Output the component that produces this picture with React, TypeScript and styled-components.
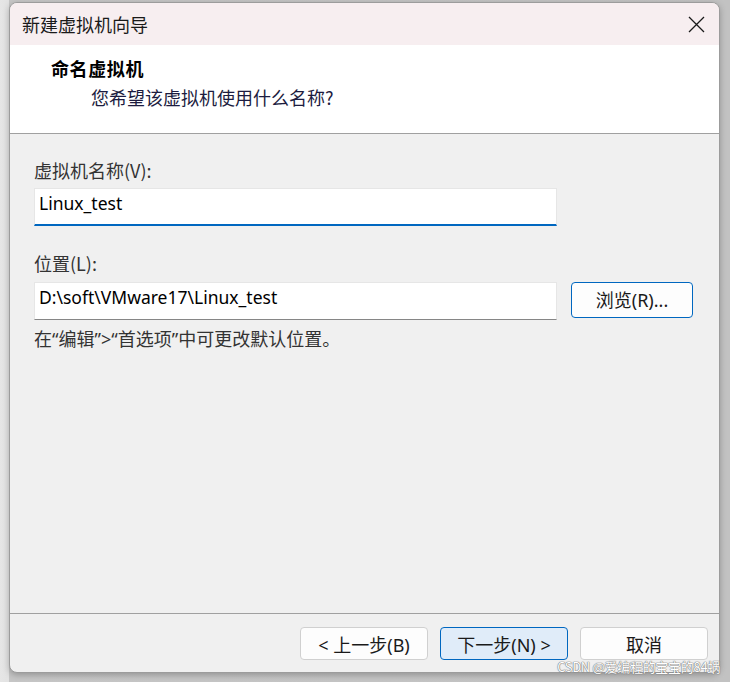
import React from "react";
import styled, { createGlobalStyle } from "styled-components";

const Global = createGlobalStyle`
  html, body { margin: 0; padding: 0; }
  body {
    width: 730px;
    height: 682px;
    overflow: hidden;
    background: linear-gradient(to right, #e6e6e6 0, #e2e2e2 9px, #c6c6c6 9px, #c2c2c2 100%);
    font-family: "Noto Sans", "Noto Sans CJK SC", sans-serif;
  }
`;

const Page = styled.div`
  position: relative;
  width: 730px;
  height: 682px;
  padding: 2px 0 0 9px;
  box-sizing: border-box;
`;

const Window = styled.div`
  width: 711px;
  height: 671px;
  box-sizing: border-box;
  border: 1px solid #9c9c9c;
  border-radius: 8px;
  overflow: hidden;
  display: flex;
  flex-direction: column;
  background: #f0f0f0;
  box-shadow: 0 2px 6px rgba(0, 0, 0, 0.25);
`;

const TitleBar = styled.div`
  height: 42px;
  flex: none;
  display: flex;
  align-items: center;
  justify-content: space-between;
  padding: 0 14px 0 12px;
  background: #f7eef0;
  font-family: "Noto Sans CJK SC", sans-serif;
  font-size: 18px;
  color: #1a1a1a;
`;

const CloseBtn = styled.div`
  width: 18px;
  height: 18px;
  display: flex;
  align-items: center;
  justify-content: center;
`;

const Header = styled.div`
  height: 89px;
  flex: none;
  box-sizing: border-box;
  background: #ffffff;
  border-bottom: 1px solid #a0a0a0;
  padding: 11px 0 0 41px;
  display: flex;
  flex-direction: column;
  gap: 5px;
  font-family: "Noto Sans CJK SC", sans-serif;
  font-size: 18px;
  line-height: 24px;
`;

const HeaderTitle = styled.div`
  font-weight: 700;
  letter-spacing: 0.6px;
  color: #000;
`;

const HeaderSub = styled.div`
  margin-left: 40px;
  color: #1c1c40;
`;

const Body = styled.div`
  flex: 1;
  padding: 24px 0 0 24px;
  display: flex;
  flex-direction: column;
  font-family: "Noto Sans CJK SC", sans-serif;
  font-size: 18px;
  line-height: 24px;
  color: #333;
`;

const Label = styled.div<{ $gap: number }>`
  margin-top: ${(p) => p.$gap}px;
  color: #333;
`;

const Row = styled.div<{ $gap: number }>`
  margin-top: ${(p) => p.$gap}px;
  display: flex;
  align-items: flex-start;
  gap: 14px;
`;

const TextBox = styled.div<{ $focused?: boolean }>`
  width: 523px;
  height: 38px;
  box-sizing: border-box;
  background: #fff;
  border: 1px solid #e6e6e6;
  border-bottom: ${(p) => (p.$focused ? "2px solid #0067c0" : "1px solid #868686")};
  padding: 0 0 0 4px;
  display: flex;
  align-items: center;
  font-family: "Noto Sans", "Noto Sans CJK SC", sans-serif;
  font-size: 17.5px;
  color: #000;
  padding-bottom: ${(p) => (p.$focused ? 7 : 8)}px;
`;

const Hint = styled.div`
  margin-top: 7px;
  color: #333;
  font-family: "Noto Sans", "Noto Sans CJK SC", sans-serif;
`;

const Footer = styled.div`
  height: 59px;
  flex: none;
  box-sizing: border-box;
  border-top: 1px solid #a0a0a0;
  padding: 13px 11px 0 0;
  display: flex;
  justify-content: flex-end;
  align-items: flex-start;
  gap: 12px;
`;

const Button = styled.div<{ $primary?: boolean; $accent?: boolean; $w?: number; $h?: number }>`
  width: ${(p) => p.$w ?? 128}px;
  height: ${(p) => p.$h ?? 33}px;
  box-sizing: border-box;
  border-radius: 4px;
  border: 1px solid ${(p) => (p.$accent ? "#0067c0" : "#d0d0d0")};
  background: ${(p) => (p.$primary ? "#e0ecf9" : "#fdfdfd")};
  display: flex;
  align-items: center;
  justify-content: center;
  font-family: "Noto Sans", "Noto Sans CJK SC", sans-serif;
  font-size: 18px;
  color: #1a1a1a;
  white-space: pre;
`;

const Watermark = styled.div`
  position: absolute;
  right: 10px;
  bottom: 6px;
  font-family: "Noto Sans CJK SC", sans-serif;
  font-size: 13px;
  color: #ffffff;
  text-shadow: 0 0 1px #777, 0 0 1px #777, 0 0 1px #777;
  letter-spacing: -0.3px;
`;

export default function App() {
  return (
    <>
      <Global />
      <Page>
        <Window>
          <TitleBar>
            <span>新建虚拟机向导</span>
            <CloseBtn>
              <svg width="17" height="17" viewBox="0 0 17 17">
                <path d="M1 1 L16 16 M16 1 L1 16" stroke="#1a1a1a" strokeWidth="1.3" fill="none" />
              </svg>
            </CloseBtn>
          </TitleBar>
          <Header>
            <HeaderTitle>命名虚拟机</HeaderTitle>
            <HeaderSub>您希望该虚拟机使用什么名称?</HeaderSub>
          </Header>
          <Body>
            <Label $gap={0}>虚拟机名称(V):</Label>
            <Row $gap={6}>
              <TextBox $focused>Linux_test</TextBox>
            </Row>
            <Label $gap={25}>位置(L):</Label>
            <Row $gap={7}>
              <TextBox>D:\soft\VMware17\Linux_test</TextBox>
              <Button $accent $w={122} $h={36}>浏览(R)...</Button>
            </Row>
            <Hint>在“编辑”&gt;“首选项”中可更改默认位置。</Hint>
          </Body>
          <Footer>
            <Button>{"< 上一步(B)"}</Button>
            <Button $primary $accent>{"下一步(N) >"}</Button>
            <Button>取消</Button>
          </Footer>
        </Window>
        <Watermark>CSDN @爱编程的宝宝的84蜗</Watermark>
      </Page>
    </>
  );
}
